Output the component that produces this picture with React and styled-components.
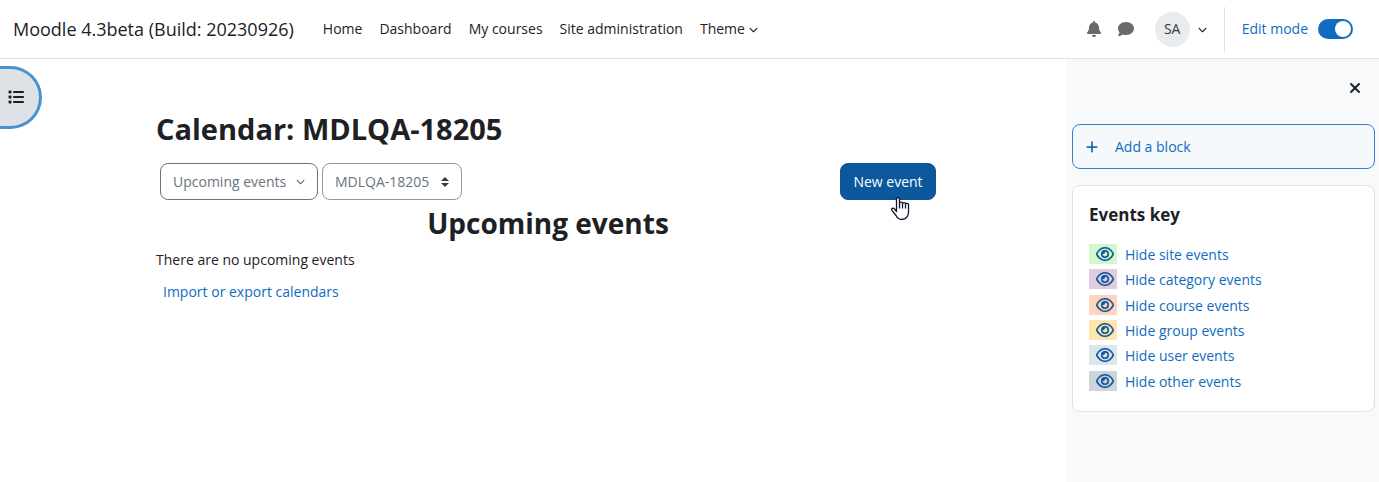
import React, { useState } from 'react';
import styled, { createGlobalStyle } from 'styled-components';
import {
  FaBell,
  FaChevronDown,
  FaComment,
  FaList,
  FaPlus,
  FaRegEye,
  FaXmark,
} from 'react-icons/fa6';

const GlobalStyle = createGlobalStyle`
  * {
    box-sizing: border-box;
  }
  body {
    margin: 0;
    background: #fff;
    color: #1d2125;
    font-family: 'Open Sans', 'Noto Sans', sans-serif;
    font-size: 14px;
    line-height: 22px;
  }
  a {
    color: #0f6cbf;
    text-decoration: none;
  }
  button,
  select {
    font: inherit;
    margin: 0;
  }
`;

const Page = styled.div`
  display: flex;
  flex-direction: column;
  min-height: 100vh;
`;

const Navbar = styled.header`
  display: flex;
  align-items: center;
  height: 59px;
  padding-left: 13px;
  padding-right: 26px;
  border-bottom: 1px solid #dee2e6;
`;

const Brand = styled.a`
  color: #1d2125;
  font-size: 18px;
  white-space: nowrap;
`;

const Nav = styled.nav`
  display: flex;
  gap: 17px;
  flex: 1;
  margin-left: 29px;
  white-space: nowrap;
`;

const NavLink = styled.a`
  display: flex;
  align-items: center;
  gap: 4px;
  color: #1d2125;
`;

const NavTools = styled.div`
  display: flex;
  align-items: center;
`;

const IconButton = styled.button`
  display: flex;
  align-items: center;
  justify-content: center;
  width: 32px;
  height: 32px;
  padding: 0;
  border: 0;
  background: none;
  color: ${props => props.color || '#1d2125'};
  font-size: 16px;
  cursor: pointer;
`;

const UserMenu = styled.button`
  display: flex;
  align-items: center;
  gap: 8px;
  margin-left: 13px;
  padding: 0;
  border: 0;
  background: none;
  color: #1d2125;
  cursor: pointer;
`;

const Avatar = styled.span`
  display: flex;
  align-items: center;
  justify-content: center;
  width: 35px;
  height: 35px;
  border-radius: 50%;
  background: #e9ecef;
  color: #343a40;
`;

const EditMode = styled.label`
  display: flex;
  align-items: center;
  gap: 10px;
  height: 45px;
  margin-left: 17px;
  padding-left: 17px;
  border-left: 1px solid #dee2e6;
  color: #0f6cbf;
  white-space: nowrap;
  cursor: pointer;
`;

const Switch = styled.input`
  appearance: none;
  display: flex;
  justify-content: flex-end;
  width: 35px;
  height: 20px;
  margin: 0;
  padding: 2px;
  border-radius: 10px;
  background: #0f6cbf;
  cursor: pointer;
  &::before {
    content: '';
    width: 16px;
    height: 16px;
    border-radius: 50%;
    background: #fff;
  }
  &:not(:checked) {
    justify-content: flex-start;
    background: #8f959e;
  }
`;

const Body = styled.div`
  display: flex;
  flex: 1;
`;

const DrawerToggle = styled.button`
  display: flex;
  align-items: center;
  width: 42px;
  height: 63px;
  margin-top: 7px;
  padding: 0 0 2px 8px;
  border: 3px solid #4a90d1;
  border-left: 0;
  border-radius: 0 32px 32px 0;
  background: #dee2e6;
  color: #1d2125;
  font-size: 16px;
  cursor: pointer;
`;

const Main = styled.main`
  flex: 1;
  min-width: 0;
  padding-top: 50px;
  padding-right: 12px;
`;

const Content = styled.div`
  max-width: 784px;
  margin: 0 auto;
`;

const Title = styled.h1`
  margin: 0;
  font-size: 29px;
  line-height: 40px;
  font-weight: 700;
`;

const Controls = styled.div`
  display: flex;
  gap: 4px;
  margin-top: 14px;
  padding: 0 4px;
`;

const ViewButton = styled.button`
  display: flex;
  align-items: center;
  justify-content: space-between;
  width: 158px;
  height: 37px;
  padding: 0 12px;
  border: 1px solid #6a737b;
  border-radius: 8px;
  background: #fff;
  color: #6a737b;
  white-space: nowrap;
  cursor: pointer;
`;

const SelectWrap = styled.div`
  display: grid;
  align-items: center;
  width: 140px;
  > * {
    grid-area: 1 / 1;
  }
  svg {
    justify-self: end;
    margin-right: 13px;
    pointer-events: none;
  }
`;

const CourseSelect = styled.select`
  appearance: none;
  width: 100%;
  height: 37px;
  padding: 0 12px;
  border: 1px solid #8f959e;
  border-radius: 8px;
  background: #fff;
  color: #6a737b;
`;

const NewEvent = styled.div`
  position: relative;
  margin-left: auto;
  svg {
    position: absolute;
    left: 50px;
    top: 33px;
  }
`;

const PrimaryButton = styled.button`
  width: 96px;
  height: 37px;
  padding: 0;
  border: 1px solid #0b5394;
  border-radius: 8px;
  background: #0c589c;
  color: #fff;
  white-space: nowrap;
  cursor: pointer;
`;

const Heading = styled.h2`
  margin: 3px 0 6px;
  font-size: 28px;
  line-height: 40px;
  font-weight: 700;
  text-align: center;
`;

const Message = styled.p`
  margin: 0;
`;

const Footer = styled.div`
  margin-top: 10px;
  padding-left: 7px;
`;

const Drawer = styled.aside`
  width: 313px;
  padding: 13px 4px 16px 6px;
  background: #f8f9fa;
`;

const DrawerHeader = styled.div`
  display: flex;
  justify-content: flex-end;
  height: 52px;
  padding-right: 4px;
`;

const AddBlock = styled.a`
  display: flex;
  align-items: center;
  gap: 16px;
  height: 45px;
  padding: 0 12px;
  border: 1px solid #3584ca;
  border-radius: 8px;
  background: #f5f9fc;
`;

const Card = styled.section`
  margin-top: 16px;
  padding: 16px 16px 15px;
  border: 1px solid #dee2e6;
  border-radius: 8px;
  background: #fff;
`;

const CardTitle = styled.h3`
  margin: 0 0 16px;
  font-size: 17px;
  line-height: 26px;
  font-weight: 700;
`;

const KeyList = styled.ul`
  display: grid;
  grid-auto-rows: 1fr;
  height: 152px;
  margin: 0;
  padding: 0;
  list-style: none;
`;

const KeyLink = styled.a`
  display: flex;
  gap: 8px;
`;

const Swatch = styled.span`
  display: flex;
  align-items: center;
  justify-content: flex-end;
  width: 28px;
  height: 20px;
  padding-right: 3px;
  background: ${props => props.color};
  color: #0c589c;
  font-size: 18px;
  svg {
    stroke-width: 6px;
  }
`;

const links = ['Home', 'Dashboard', 'My courses', 'Site administration'];

const eventTypes = [
  { name: 'site', color: '#d3f8cd' },
  { name: 'category', color: '#e0cde0' },
  { name: 'course', color: '#ffd3bd' },
  { name: 'group', color: '#fee7ae' },
  { name: 'user', color: '#dce7ec' },
  { name: 'other', color: '#ced4da' },
];

function SortArrows() {
  return (
    <svg width="8" height="10" viewBox="0 0 4 5" aria-hidden="true">
      <path fill="#343a40" d="M2 0L0 2h4zm0 5L0 3h4z" />
    </svg>
  );
}

function HandPointer() {
  return (
    <svg width="20" height="26" viewBox="0 0 20 26" aria-hidden="true">
      <path
        d="M6.500 15.500V3.200a1.500 1.500 0 0 1 3 0V7.500a1.500 1.500 0 0 1 3 .3 1.500 1.500 0 0 1 3 .6 1.500 1.500 0 0 1 3 1.100v6.500c0 4-2.500 7.500-6.500 7.500-3 0-4.700-1.400-6-4L1.800 14.200c-.8-1.600 1.200-2.700 2.500-1.500z"
        fill="#fff"
        stroke="#10182b"
        strokeWidth="1.300"
        strokeLinejoin="round"
      />
      <path d="M9.500 7.500v5M12.500 8v4.500M15.500 8.800v3.700" stroke="#10182b" strokeWidth="1.300" />
    </svg>
  );
}

function Header() {
  const [editing, setEditing] = useState(true);

  return (
    <Navbar>
      <Brand href="#">Moodle 4.3beta (Build: 20230926)</Brand>
      <Nav>
        {links.map(link => (
          <NavLink href="#" key={link}>{link}</NavLink>
        ))}
        <NavLink href="#">
          Theme <FaChevronDown size={9} />
        </NavLink>
      </Nav>
      <NavTools>
        <IconButton color="#6a6a6a" aria-label="Notifications"><FaBell /></IconButton>
        <IconButton color="#6a6a6a" aria-label="Messages"><FaComment /></IconButton>
        <UserMenu aria-label="User menu">
          <Avatar>SA</Avatar>
          <FaChevronDown size={9} />
        </UserMenu>
        <EditMode htmlFor="edit-mode">
          Edit mode
          <Switch
            id="edit-mode"
            type="checkbox"
            checked={editing}
            onChange={() => setEditing(!editing)}
          />
        </EditMode>
      </NavTools>
    </Navbar>
  );
}

function Calendar() {
  return (
    <Content>
      <Title>Calendar: MDLQA-18205</Title>
      <Controls>
        <ViewButton>
          Upcoming events <FaChevronDown size={9} />
        </ViewButton>
        <SelectWrap>
          <CourseSelect aria-label="Course">
            <option>MDLQA-18205</option>
          </CourseSelect>
          <SortArrows />
        </SelectWrap>
        <NewEvent>
          <PrimaryButton>New event</PrimaryButton>
          <HandPointer />
        </NewEvent>
      </Controls>
      <Heading>Upcoming events</Heading>
      <Message>There are no upcoming events</Message>
      <Footer>
        <a href="#">Import or export calendars</a>
      </Footer>
    </Content>
  );
}

function BlocksDrawer() {
  return (
    <Drawer>
      <DrawerHeader>
        <IconButton aria-label="Close block drawer"><FaXmark /></IconButton>
      </DrawerHeader>
      <AddBlock href="#">
        <FaPlus size={14} /> Add a block
      </AddBlock>
      <Card>
        <CardTitle>Events key</CardTitle>
        <KeyList>
          {eventTypes.map(type => (
            <li key={type.name}>
              <KeyLink href="#">
                <Swatch color={type.color}><FaRegEye /></Swatch>
                Hide {type.name} events
              </KeyLink>
            </li>
          ))}
        </KeyList>
      </Card>
    </Drawer>
  );
}

function App() {
  return (
    <Page>
      <GlobalStyle />
      <Header />
      <Body>
        <DrawerToggle aria-label="Open course index"><FaList /></DrawerToggle>
        <Main>
          <Calendar />
        </Main>
        <BlocksDrawer />
      </Body>
    </Page>
  );
}

export default App;
